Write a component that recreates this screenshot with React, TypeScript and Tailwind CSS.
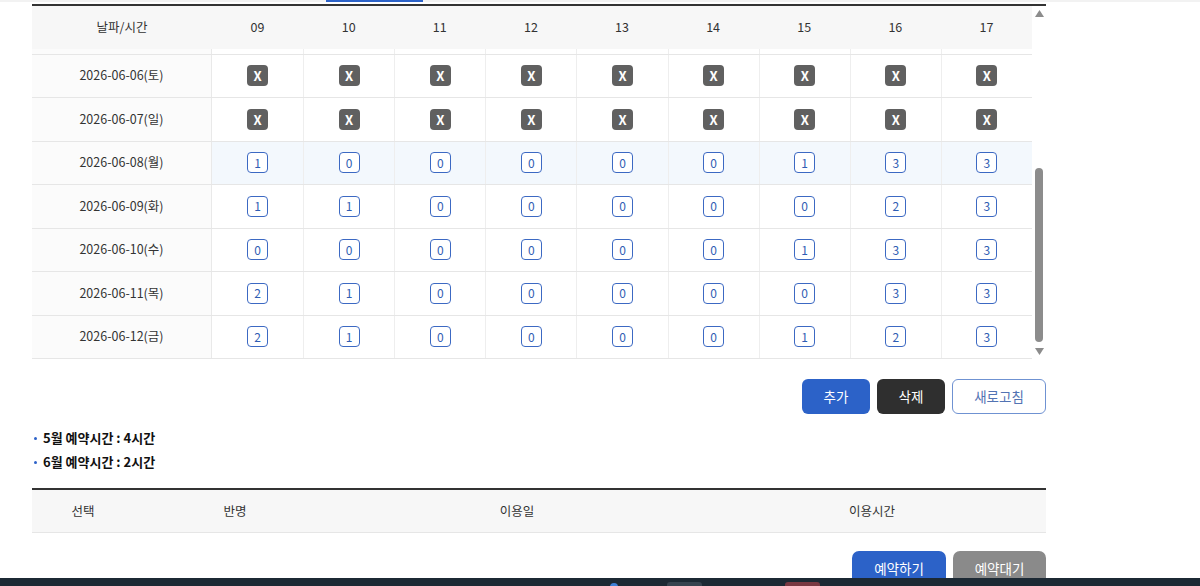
import React from 'react';

type Cell = number | 'X';

interface DayRow {
  date: string;
  slots: Cell[];
  active?: boolean;
}

const hours = ['09', '10', '11', '12', '13', '14', '15', '16', '17'];

const X9: Cell[] = ['X', 'X', 'X', 'X', 'X', 'X', 'X', 'X', 'X'];

// rows currently in view (the list is scrolled to its end)
const rows: DayRow[] = [
  { date: '2026-06-06(토)', slots: X9 },
  { date: '2026-06-07(일)', slots: X9 },
  { date: '2026-06-08(월)', slots: [1, 0, 0, 0, 0, 0, 1, 3, 3], active: true },
  { date: '2026-06-09(화)', slots: [1, 1, 0, 0, 0, 0, 0, 2, 3] },
  { date: '2026-06-10(수)', slots: [0, 0, 0, 0, 0, 0, 1, 3, 3] },
  { date: '2026-06-11(목)', slots: [2, 1, 0, 0, 0, 0, 0, 3, 3] },
  { date: '2026-06-12(금)', slots: [2, 1, 0, 0, 0, 0, 1, 2, 3] },
];

const Badge: React.FC<{ value: Cell }> = ({ value }) => {
  if (value === 'X') {
    return (
      <span className="flex h-[21px] w-[21px] items-center justify-center rounded-[4px] bg-[#606060] text-[13px] font-bold leading-none text-white">
        X
      </span>
    );
  }
  return (
    <span className="flex h-[21px] w-[21px] items-center justify-center rounded-[4px] border-[1.5px] border-[#3c69c3] bg-white text-[12px] leading-none text-[#2f5db3]">
      {value}
    </span>
  );
};

const ScrollBar: React.FC = () => (
  <div className="flex w-[14px] flex-col items-center pt-[4px] pb-[4px]">
    <svg width="9" height="7" viewBox="0 0 9 7">
      <polygon points="4.5,0 9,7 0,7" fill="#8c8c8c" />
    </svg>
    <div className="flex flex-1 flex-col justify-end pb-[6px]">
      <div className="h-[174px] w-[8px] rounded-full bg-[#8c8c8c]" />
    </div>
    <svg width="9" height="7" viewBox="0 0 9 7">
      <polygon points="0,0 9,0 4.5,7" fill="#8c8c8c" />
    </svg>
  </div>
);

const App: React.FC = () => {
  return (
    <div className="h-[586px] overflow-hidden bg-white font-['Noto_Sans_CJK_KR','Noto_Sans',sans-serif] text-[#333]">
      {/* tab strip */}
      <div className="h-[2px] bg-[#f2f2f2]">
        <div className="ml-[326px] h-[2px] w-[97px] bg-[#2c62c8]" />
      </div>
      <div className="h-[2px]" />

      <div className="ml-[32px] w-[1014px]">
        {/* schedule table */}
        <div className="flex border-t-2 border-[#333]">
          <div className="w-[1000px]">
            <div className="grid h-[43px] grid-cols-[180px_repeat(9,1fr)] items-center bg-[#f7f7f7] text-[12.5px] text-[#333]">
              <div className="text-center">날파/시간</div>
              {hours.map((h) => (
                <div key={h} className="text-center">
                  {h}
                </div>
              ))}
            </div>
            <div className="h-[310px]">
              {/* tail of the row scrolled above */}
              <div className="grid h-[5.5px] grid-cols-[180px_repeat(9,1fr)] border-b border-[#e6e6e6]">
                <div className="border-r border-[#e9e9e9] bg-[#fbfbfb]" />
                {hours.map((h, i) => (
                  <div key={h} className={i > 0 ? 'border-l border-[#eeeeee] bg-white' : 'bg-white'} />
                ))}
              </div>
              {rows.map((row) => (
                <div
                  key={row.date}
                  className="grid h-[43.5px] grid-cols-[180px_repeat(9,1fr)] border-b border-[#e6e6e6]"
                >
                  <div className="flex items-center justify-center border-r border-[#e9e9e9] bg-[#fbfbfb] text-[12.5px] text-[#333]">
                    {row.date}
                  </div>
                  {row.slots.map((s, i) => (
                    <div
                      key={i}
                      className={`flex items-center justify-center ${i > 0 ? 'border-l border-[#eeeeee]' : ''} ${
                        row.active ? 'bg-[#f3f8fd]' : 'bg-white'
                      }`}
                    >
                      <Badge value={s} />
                    </div>
                  ))}
                </div>
              ))}
            </div>
          </div>
          <ScrollBar />
        </div>

        {/* actions */}
        <div className="mt-[20px] flex justify-end gap-[7px] text-[13.5px]">
          <button className="h-[35px] w-[68px] rounded-[6px] bg-[#2c62c8] text-white">추가</button>
          <button className="h-[35px] w-[68px] rounded-[6px] bg-[#2f2f2f] text-white">삭제</button>
          <button className="h-[35px] w-[94px] rounded-[6px] border border-[#6f92d2] bg-white text-[#5273b3]">
            새로고침
          </button>
        </div>

        {/* monthly summary */}
        <ul className="mt-[12px] text-[13px] font-bold text-[#111]">
          <li className="flex h-[24px] items-center">
            <span className="ml-[2px] mr-[6px] h-[3px] w-[3px] rounded-full bg-[#2c62c8]" />
            5월 예약시간 : 4시간
          </li>
          <li className="flex h-[24px] items-center">
            <span className="ml-[2px] mr-[6px] h-[3px] w-[3px] rounded-full bg-[#2c62c8]" />
            6월 예약시간 : 2시간
          </li>
        </ul>

        {/* reservation list */}
        <div className="mt-[14px] border-t-2 border-[#333]">
          <div className="grid h-[43px] grid-cols-[102px_202px_362px_1fr] items-center border-b border-[#e6e6e6] bg-[#f7f7f7] text-[12.5px] text-[#333]">
            <div className="text-center">선택</div>
            <div className="text-center">반명</div>
            <div className="text-center">이용일</div>
            <div className="text-center">이용시간</div>
          </div>
        </div>

        <div className="mt-[18px] flex justify-end gap-[7px] text-[13.5px]">
          <button className="h-[35px] w-[94px] rounded-[7px] bg-[#2c62c8] text-white">예약하기</button>
          <button className="h-[35px] w-[93px] rounded-[7px] bg-[#8a8a8a] text-white">예약대기</button>
        </div>
      </div>

      {/* OS taskbar peeking in at the bottom */}
      <div className="fixed bottom-0 left-0 h-[8px] w-full bg-[#1c2934]">
        <div className="absolute left-[610px] top-[5px] h-[8px] w-[8px] rounded-full bg-[#3d7fd6]" />
        <div className="absolute left-[667px] top-[4px] h-[8px] w-[35px] rounded-[3px] bg-[#36434f]" />
        <div className="absolute left-[785px] top-[4px] h-[8px] w-[35px] rounded-[3px] bg-[#7a3842]" />
      </div>
    </div>
  );
};

export default App;
